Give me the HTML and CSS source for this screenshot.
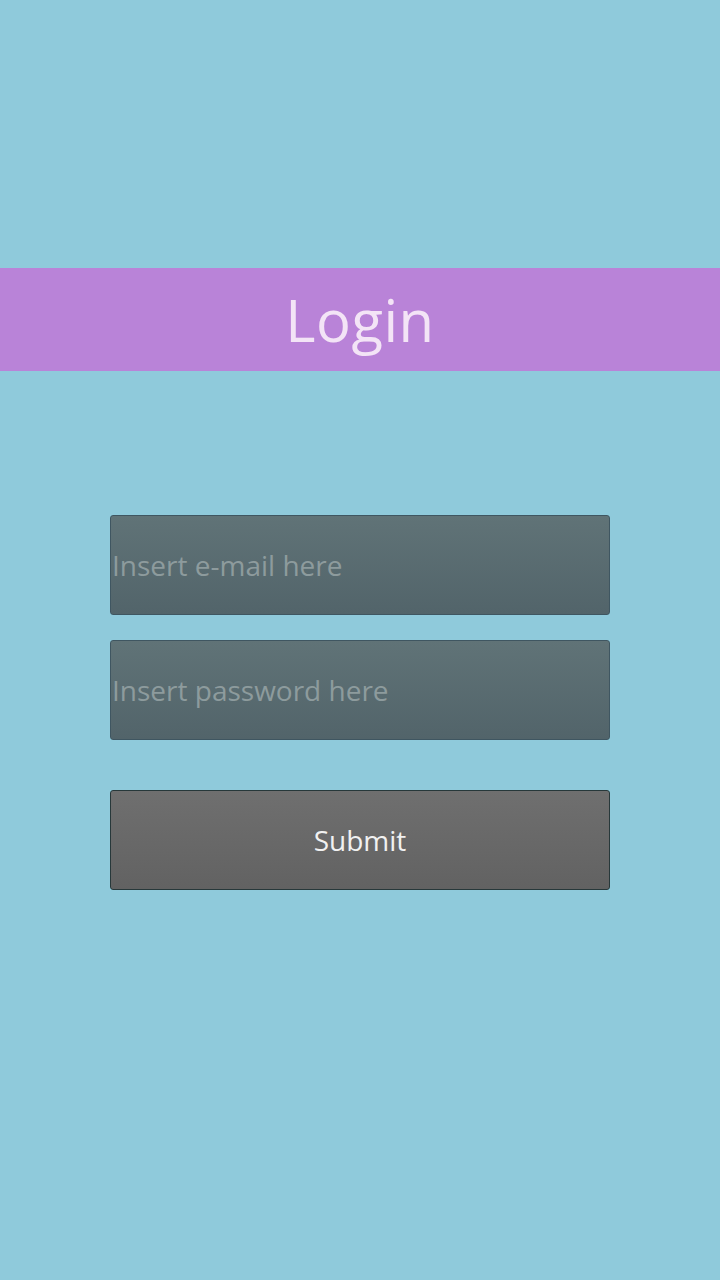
FILE: index.html
```html
<!DOCTYPE html>
<html>
<head>
<meta charset="utf-8">
<link rel="stylesheet" href="styles.css">
</head>
<body>
<div class="screen">
  <header class="bar"><h1 class="title">Login</h1></header>
  <form class="form">
    <input class="field" type="text" placeholder="Insert e-mail here">
    <input class="field" type="password" placeholder="Insert password here">
    <button class="submit" type="button">Submit</button>
  </form>
</div>
</body>
</html>
```
FILE: styles.css
```css
html, body {
  margin: 0;
  padding: 0;
  background: #8fcadb;
}
.screen {
  width: 720px;
  height: 1280px;
  display: flex;
  flex-direction: column;
  align-items: center;
  font-family: "Open Sans", "Noto Sans", sans-serif;
}
.bar {
  margin-top: 268px;
  width: 100%;
  height: 103px;
  background: #b983d8;
  display: flex;
  align-items: center;
  justify-content: center;
}
.title {
  margin: 0;
  font-weight: 400;
  font-size: 58px;
  color: #f3e4f6;
  line-height: 1;
  letter-spacing: 0.5px;
}
.form {
  margin-top: 144px;
  width: 500px;
  display: flex;
  flex-direction: column;
}
.field {
  box-sizing: border-box;
  width: 500px;
  height: 100px;
  margin: 0 0 25px 0;
  padding: 0 0 0 1px;
  border: 1px solid #3f5661;
  border-radius: 3px;
  background: linear-gradient(#607377, #52646a);
  font-family: inherit;
  font-size: 28px;
  color: #8e9c9e;
  outline: none;
}
.field::placeholder {
  color: #8d9b9d;
}
.submit {
  box-sizing: border-box;
  width: 500px;
  height: 100px;
  margin-top: 25px;
  border: 1px solid #27383a;
  border-radius: 3px;
  background: linear-gradient(#6f6f6f, #626262);
  color: #f1f1f1;
  font-family: inherit;
  font-size: 28px;
  padding: 0;
}
```
